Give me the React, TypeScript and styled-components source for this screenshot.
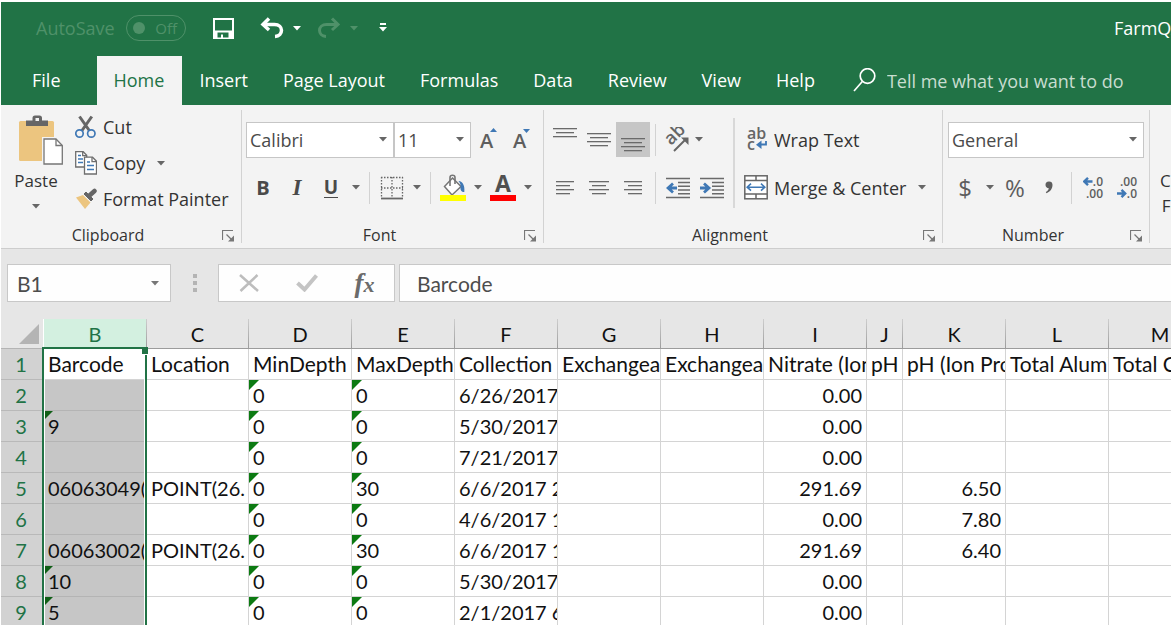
import React from "react";
import styled, { createGlobalStyle } from "styled-components";

const ui = `"Open Sans", "Noto Sans", sans-serif`;
const sheetFont = `Lato, "Open Sans", sans-serif`;
const green = "#217346";
const ink = "#333333";
const iconGrey = "#6a6a6a";
const blue = "#3f78b5";

const GlobalStyle = createGlobalStyle`
  *, *::before, *::after { box-sizing: border-box; }
  body { margin: 0; background: #ffffff; font-family: ${ui}; color: ${ink}; }
  button, input, select { font: inherit; color: inherit; margin: 0; }
  svg { display: block; flex: none; }
`;

const Window = styled.div`
  height: 100vh;
  padding: 2px 1px 6px;
  display: flex;
  flex-direction: column;
  overflow: hidden;
`;

const PlainButton = styled.button`
  border: 0;
  padding: 0;
  background: none;
  display: flex;
  align-items: center;
  white-space: nowrap;
`;

/* ---------- title bar ---------- */

const TitleBar = styled.header`
  flex: none;
  height: 54px;
  padding: 0 0 2px 35px;
  background: ${green};
  color: #ffffff;
  display: flex;
  align-items: center;
  overflow: hidden;
`;

const AutoSave = styled.label`
  width: 90px;
  font-size: 18px;
  color: #4f9169;
  white-space: nowrap;
`;

const Toggle = styled(PlainButton)`
  width: 60px;
  height: 26px;
  border: 1px solid #4f9169;
  border-radius: 13px;
  padding: 0 8px 0 6px;
  justify-content: space-between;
  color: #4f9169;
  font-size: 15px;
`;

const ToggleDot = styled.span`
  width: 12px;
  height: 12px;
  border-radius: 50%;
  background: #4f9169;
`;

const QuickTools = styled.div`
  margin-left: 27px;
  display: flex;
  align-items: center;
`;

const QuickButton = styled(PlainButton)<{ $w: number }>`
  width: ${(p) => p.$w}px;
  height: 30px;
`;

const DocumentName = styled.div`
  margin-left: auto;
  width: 57px;
  font-size: 18px;
  white-space: nowrap;
`;

/* ---------- ribbon tabs ---------- */

const TabBar = styled.nav`
  flex: none;
  height: 49px;
  padding-left: 14px;
  background: ${green};
  color: #ffffff;
  display: flex;
  font-size: 18px;
`;

const Tab = styled(PlainButton)<{ $active?: boolean; $apart?: boolean }>`
  padding: 0 18px 2px 17px;
  margin-right: ${(p) => (p.$apart ? 18 : 0)}px;
  background: ${(p) => (p.$active ? "#f3f3f3" : "transparent")};
  color: ${(p) => (p.$active ? green : "#ffffff")};
`;

const TellMe = styled.label`
  margin-left: 20px;
  flex: 1;
  display: flex;
  align-items: center;
  gap: 10px;
`;

const TellMeInput = styled.input`
  flex: 1;
  min-width: 0;
  border: 0;
  padding: 0;
  background: transparent;
  outline: 0;
  &::placeholder { color: #c8ddd0; opacity: 1; }
`;

/* ---------- ribbon ---------- */

const Ribbon = styled.section`
  flex: none;
  height: 144px;
  background: #f3f3f3;
  border-bottom: 1px solid #cdcdcd;
  display: flex;
  overflow: hidden;
`;

const Group = styled.div<{ $w?: number }>`
  flex: ${(p) => (p.$w ? "none" : "1 0 0")};
  width: ${(p) => (p.$w ? `${p.$w}px` : "auto")};
  display: flex;
  flex-direction: column;
`;

const GroupDivider = styled.div`
  flex: none;
  width: 1px;
  margin: 5px 0;
  background: #d2d2d2;
`;

const GroupBody = styled.div<{ $left: number }>`
  flex: 1;
  min-height: 0;
  padding: 4px 0 0 ${(p) => p.$left}px;
  display: flex;
  align-items: flex-start;
`;

const GroupFooter = styled.div`
  flex: none;
  height: 26px;
  display: flex;
  align-items: center;
  font-size: 16px;
`;

const GroupName = styled.span`
  flex: 1;
  text-align: center;
`;

const Launcher = styled(PlainButton)`
  width: 26px;
  height: 26px;
  justify-content: center;
`;

const PasteButton = styled(PlainButton)`
  width: 54px;
  padding-top: 6px;
  flex-direction: column;
  font-size: 17px;
  line-height: 28px;
`;

const PasteCaret = styled.span`
  height: 22px;
  display: flex;
  align-items: center;
`;

const CommandList = styled.div`
  margin-left: 12px;
  display: flex;
  flex-direction: column;
`;

const Command = styled(PlainButton)`
  height: 36px;
  gap: 6px;
  font-size: 18px;
`;

const CommandCaret = styled.span`
  margin-left: 6px;
`;

const ToolRows = styled.div`
  padding-top: 13px;
  display: flex;
  flex-direction: column;
  gap: 13px;
`;

const ToolRow = styled.div`
  height: 35px;
  display: flex;
  align-items: center;
`;

const ToolButton = styled(PlainButton)<{ $w?: number; $pressed?: boolean }>`
  width: ${(p) => p.$w ?? 34}px;
  height: 35px;
  justify-content: center;
  background: ${(p) => (p.$pressed ? "#c6c6c6" : "transparent")};
  color: #4a4a4a;
  font-size: 19px;
`;

const CaretButton = styled(PlainButton)`
  width: 16px;
  height: 35px;
  justify-content: center;
`;

const ToolDivider = styled.span`
  width: 1px;
  height: 32px;
  margin: 0 5px;
  background: #d2d2d2;
`;

const TallDivider = styled.span`
  width: 2px;
  height: 90px;
  margin: 9px 9px 0 4px;
  background: #d8d8d8;
`;

const Bold = styled.b`
  font-size: 20px;
`;

const Italic = styled.i`
  font-family: "Liberation Serif", serif;
  font-weight: 700;
  font-size: 23px;
`;

const Underline = styled.span`
  font-weight: 700;
  line-height: 20px;
  border-bottom: 1px solid #4a4a4a;
`;

const Symbol = styled.span`
  font-size: 24px;
  color: #5e5e5e;
`;

const SelectBox = styled.span<{ $w: number }>`
  width: ${(p) => p.$w}px;
  height: 36px;
  display: grid;
  align-items: center;
  background: #ffffff;
  border: 1px solid #c6c6c6;

  & > * { grid-area: 1 / 1; }
  & > svg { justify-self: end; margin-right: 6px; pointer-events: none; }
`;

const SelectControl = styled.select`
  appearance: none;
  width: 100%;
  height: 34px;
  border: 0;
  padding: 0 3px;
  background: transparent;
  color: #4a4a4a;
  font-size: 18px;
`;

const ConditionalButton = styled(PlainButton)`
  padding-top: 59px;
  flex-direction: column;
  font-size: 17px;
  line-height: 25px;
`;

/* ---------- formula bar ---------- */

const FormulaBar = styled.section`
  flex: none;
  height: 70px;
  padding: 15px 0 17px 6px;
  background: #e6e6e6;
  display: flex;
  font-family: ${sheetFont};
  font-size: 21px;
  color: #4d4d4d;
`;

const NameBox = styled.label`
  width: 164px;
  border: 1px solid #c8c8c8;
  background: #fefefe;
  padding: 0 11px 0 9px;
  display: flex;
  align-items: center;
`;

const BareInput = styled.input`
  flex: 1;
  min-width: 0;
  border: 0;
  padding: 0;
  background: transparent;
  outline: 0;
`;

const Grip = styled.span`
  width: 47px;
  display: flex;
  flex-direction: column;
  align-items: center;
  justify-content: center;
  gap: 3px;
`;

const GripDot = styled.span`
  width: 4px;
  height: 4px;
  background: #b4b4b4;
`;

const EntryButtons = styled.div`
  width: 177px;
  border: 1px solid #c8c8c8;
  background: #fefefe;
  display: flex;
  justify-content: center;
`;

const EntryButton = styled(PlainButton)`
  width: 58px;
  justify-content: center;
  font: italic 700 27px "Liberation Serif", serif;
  color: #6b6b6b;
`;

const SmallX = styled.span`
  font-size: 22px;
`;

const FormulaBox = styled.label`
  flex: 1;
  margin-left: 4px;
  padding-left: 17px;
  border: 1px solid #c8c8c8;
  border-right: 0;
  background: #fefefe;
  display: flex;
  align-items: center;
`;

/* ---------- sheet ---------- */

const SheetArea = styled.main`
  flex: 1;
  min-height: 0;
  background: #ffffff;
  overflow: hidden;
`;

const Sheet = styled.table`
  table-layout: fixed;
  width: 1px;
  border-collapse: separate;
  border-spacing: 0;
  font-family: ${sheetFont};
  font-size: 20px;
  color: #111111;
`;

const ColumnHead = styled.th<{ $selected?: boolean }>`
  height: 30px;
  padding: 2px 0 0;
  font-weight: 400;
  line-height: 27px;
  background: ${(p) => (p.$selected ? "#d3f0e0" : "#e6e6e6")};
  color: ${(p) => (p.$selected ? green : "#111111")};
  border-bottom: 1px solid #9b9b9b;
  border-right: 1px solid;
  border-image: linear-gradient(#cfcfcf, #9b9b9b) 1;
`;

const CornerHead = styled.th`
  height: 30px;
  padding: 0 4px 4px 0;
  background: #e6e6e6;
  border-bottom: 1px solid #b4b4b4;
  border-right: 1px solid #ffffff;
  vertical-align: bottom;

  & > svg { margin-left: auto; }
`;

const RowHead = styled.th`
  height: 31px;
  padding: 1px 3px 1px 0;
  font-weight: 400;
  line-height: 28px;
  background: #d2d2d2;
  color: ${green};
  border-bottom: 1px solid #b9b9b9;
`;

const Cell = styled.td<{ $selected?: boolean; $flag?: boolean; $right?: boolean; $title?: boolean }>`
  position: relative;
  height: 31px;
  padding: 1px 0;
  font-size: ${(p) => (p.$title ? 21 : 20)}px;
  line-height: 28px;
  text-align: ${(p) => (p.$right ? "right" : "left")};
  background: ${(p) => (p.$selected ? "#c6c6c6" : "#ffffff")};
  border-right: 1px solid #d4d4d4;
  border-bottom: 1px solid ${(p) => (p.$selected ? "#b4b4b4" : "#d4d4d4")};

  &::before {
    content: "";
    display: ${(p) => (p.$flag ? "block" : "none")};
    position: absolute;
    left: ${(p) => (p.$selected ? 1 : 0)}px;
    top: 0;
    border: ${(p) => (p.$selected ? 4 : 5)}px solid transparent;
    border-top-color: ${(p) => (p.$selected ? "#0f5f16" : "#0c7a12")};
    border-left-color: ${(p) => (p.$selected ? "#0f5f16" : "#0c7a12")};
  }
`;

const CellText = styled.div`
  position: relative;
  padding: 0 4px;
  height: 28px;
  overflow: hidden;
  white-space: nowrap;
`;

const SelectionFrame = styled.div`
  position: absolute;
  z-index: 1;
  left: -2px;
  top: -2px;
  width: 105px;
  height: 200vh;
  border: 2px solid ${green};
  box-shadow: inset 1px 0 #ffffff, inset -1px 0 #ffffff;
  pointer-events: none;

  &::after {
    content: "";
    position: absolute;
    right: -3px;
    top: -2px;
    width: 6px;
    height: 8px;
    background: ${green};
    border-bottom: 1px solid #ffffff;
  }
`;

/* ---------- icons ---------- */

const Caret = ({ color = "#666666" }: { color?: string }) => (
  <svg width="8" height="5" viewBox="0 0 8 5"><path d="M0 0h8L4 4.6z" fill={color} /></svg>
);

const SaveIcon = () => (
  <svg width="21" height="21" viewBox="0 0 21 21">
    <path fillRule="evenodd" fill="#fff" d="M0 0h21v21H0zM2 2v10.500h17V2zM4.500 14.500V19.500H8v-3h2v3h5.500v-5z" />
  </svg>
);

const UndoIcon = () => (
  <svg width="24" height="22" viewBox="0 0 24 22" fill="none" stroke="#fff" strokeWidth="3.500">
    <path d="M9 1.500L3 7.500l6 5.500" />
    <path d="M3 7.500h11.500c4.500 0 7 2.800 7 5.800s-2.300 6-6.500 6.200" />
  </svg>
);

const RedoIcon = () => (
  <svg width="25" height="22" viewBox="0 0 25 22" fill="none" stroke="#4f9169" strokeWidth="3">
    <path d="M15 1.500l6 6-6 5.500" />
    <path d="M21 7.500H9.500c-4.500 0-7 2.800-7 5.800s2.300 6 6.500 6.200" />
  </svg>
);

const CustomizeIcon = () => (
  <svg width="8" height="10" viewBox="0 0 8 10" fill="#fff"><path d="M1 0h6v2H1zM0 4h8L4 8.600z" /></svg>
);

const SearchIcon = () => (
  <svg width="24" height="26" viewBox="0 0 24 26" fill="none" stroke="#fff" strokeWidth="1.700">
    <circle cx="14.500" cy="8" r="7.300" /><path d="M9.300 13.500L1 23" />
  </svg>
);

const PasteIcon = () => (
  <svg width="54" height="52" viewBox="0 0 54 52">
    <rect x="10" y="6" width="35" height="40" rx="1.500" fill="#ecc57f" />
    <path d="M17 11V5.500h6.500V3a2.500 2.500 0 0 1 2.500-2.500h4.500A2.500 2.500 0 0 1 33 3v2.500h6V11z" fill="#666" />
    <rect x="26.500" y="3" width="3.500" height="3" fill="#f3f3f3" />
    <path d="M33 22h15l7 8v22H33z" fill="#f3f3f3" />
    <path d="M35 24h12l6.300 6.500V49H35z" fill="#fff" stroke="#767676" strokeWidth="1.300" />
    <path d="M47 24v6.500h6.300" fill="none" stroke="#767676" strokeWidth="1.300" />
  </svg>
);

const CutIcon = () => (
  <svg width="22" height="24" viewBox="0 0 22 24" fill="none">
    <path d="M4.500 1.500l9.800 14M16.800 1.500L7 15.500" stroke="#666" strokeWidth="3" />
    <circle cx="4.500" cy="18.500" r="3.700" stroke={blue} strokeWidth="1.700" />
    <circle cx="16.300" cy="18.500" r="3.700" stroke={blue} strokeWidth="1.700" />
  </svg>
);

const CopyIcon = () => (
  <svg width="22" height="24" viewBox="0 0 22 24" fill="#fff" stroke="#6e6e6e" strokeWidth="1.300">
    <path d="M.7.7h7.500l3.500 3.500V16H.7z" /><path d="M7.700.7v4h4" fill="none" />
    <path d="M3 4.500h3M3 8h5M3 11.500h5" stroke={blue} strokeWidth="1.500" />
    <path d="M9.500 6.200h8l4 4V23h-12z" /><path d="M17 6.200v4.500h4.500" fill="none" />
    <path d="M12 11h3M12 14.500h7M12 18.500h7" stroke={blue} strokeWidth="1.500" />
  </svg>
);

const PainterIcon = () => (
  <svg width="22" height="22" viewBox="0 0 22 22">
    <path d="M1 9.500l7-2.500 7.500 7.500L10 21z" fill="#ecc57f" />
    <path d="M8 6l3-3 8 8-3 3z" fill="#666" stroke="#f3f3f3" />
    <path d="M14.500 7.500l5-4.500" stroke="#666" strokeWidth="4.500" strokeLinecap="round" />
  </svg>
);

const LauncherIcon = () => (
  <svg width="13" height="13" viewBox="0 0 13 13" fill="none" stroke="#777">
    <path d="M.5 11V1.500H11" strokeWidth="1.200" />
    <path d="M4.500 5.500l6 6" strokeWidth="1.300" /><path d="M12 6.500V12.500H6z" fill="#777" stroke="none" />
  </svg>
);

const SizeIcon = ({ grow }: { grow?: boolean }) => (
  <svg width="22" height="24" viewBox="0 0 22 24">
    <text x="2" y="20" fontFamily="Open Sans" fontWeight="600" fontSize="20" fill="#5e5e5e">A</text>
    <path d={grow ? "M12 4h7l-3.500-4z" : "M12 1h7l-3.500 4z"} fill={blue} />
  </svg>
);

const BordersIcon = () => (
  <svg width="24" height="24" viewBox="0 0 24 24" fill="none" stroke="#666">
    <path d="M1.500 1v20M12 1v20M22.500 1v20M1 1.500h22M1 12h22" strokeWidth="1.300" strokeDasharray="1.500 1.500" />
    <path d="M1 22.500h22" strokeWidth="1.800" />
  </svg>
);

const FillIcon = () => (
  <svg width="26" height="28" viewBox="0 0 26 28">
    <path d="M12.500 4l8.500 8.500-9 8.500L4.500 12.500z" fill="#fff" stroke="#767676" strokeWidth="1.500" />
    <path d="M10 12V3.500C10 .5 15 .5 15 3.500V10" fill="none" stroke="#767676" strokeWidth="1.600" />
    <path d="M18.500 7c4.500.5 6.500 5 5.800 11-3 0-4-2-3.800-4.500.5-2 0-4-2-6.500z" fill={blue} />
    <rect y="21" width="26" height="6" fill="#ffff00" />
  </svg>
);

const FontColorIcon = () => (
  <svg width="26" height="28" viewBox="0 0 26 28">
    <text x="13" y="18" textAnchor="middle" fontFamily="Open Sans" fontWeight="700" fontSize="23" fill="#505050">A</text>
    <rect y="21" width="26" height="6" fill="#ff0000" />
  </svg>
);

const LinesIcon = ({ lines, height = 18 }: { lines: [number, number, number][]; height?: number }) => (
  <svg width="24" height={height} viewBox={`0 0 24 ${height}`} fill={iconGrey}>
    {lines.map(([x, y, w]) => <rect key={y} x={x} y={y} width={w} height="1.300" />)}
  </svg>
);

const OrientationIcon = () => (
  <svg width="26" height="26" viewBox="0 0 26 26">
    <text x="8" y="19" transform="rotate(-45 8 19)" fontFamily="Open Sans" fontWeight="600" fontSize="18" fill="#666">ab</text>
    <path d="M11 24L23 12" stroke="#666" strokeWidth="1.900" /><path d="M18 10.500H25.500V18z" fill="#666" />
  </svg>
);

const IndentIcon = ({ increase }: { increase?: boolean }) => (
  <svg width="24" height="22" viewBox="0 0 24 22">
    <path d="M0 1.500h24M12 5.500h12M12 9.200h12M12 13h12M12 16.800h12M0 20.500h24" stroke={iconGrey} strokeWidth="1.400" />
    <path
      d={increase ? "M0 11h9M4 6.500l5 4.500-5 4.500" : "M11 11H2M7 6.500L2 11l5 4.500"}
      fill="none" stroke={blue} strokeWidth="2.800"
    />
  </svg>
);

const WrapIcon = () => (
  <svg width="24" height="26" viewBox="0 0 24 26">
    <g fontFamily="Open Sans" fontWeight="600" fontSize="16" fill="#666">
      <text x="3" y="12">ab</text><text x="3" y="23">c</text>
    </g>
    <path d="M22 14v3.500h-8" fill="none" stroke={blue} strokeWidth="1.800" />
    <path d="M17.500 13.500v8.500L12 17.700z" fill={blue} />
  </svg>
);

const MergeIcon = () => (
  <svg width="24" height="25" viewBox="0 0 24 25" fill="none">
    <rect x=".8" y=".8" width="22.400" height="23" fill="#fff" stroke="#666" strokeWidth="1.500" />
    <path d="M1 5.500h22M1 19h22M12 1v4.500M12 19v5" stroke="#666" strokeWidth="1.500" />
    <path d="M3.500 12.200h17M7 8.700l-3.800 3.500L7 15.700M17 8.700l3.800 3.500-3.800 3.500" stroke={blue} strokeWidth="1.600" />
  </svg>
);

const DecimalIcon = ({ fewer }: { fewer?: boolean }) => (
  <svg width="22" height="24" viewBox="0 0 22 24">
    <g fontFamily="Open Sans" fontWeight="600" fontSize="12" fill="#5e5e5e">
      <text x="20" y="10" textAnchor="end">{fewer ? ".00" : ".0"}</text>
      <text x="20" y="22" textAnchor="end">{fewer ? ".0" : ".00"}</text>
    </g>
    <path
      d={fewer ? "M0 17.500h7M4.500 13.800L8.200 17.500l-3.700 3.700" : "M9.500 5.500h-7M5 1.800L1.300 5.500 5 9.200"}
      fill="none" stroke={blue} strokeWidth="2.400"
    />
  </svg>
);

const CommaIcon = () => (
  <svg width="10" height="14" viewBox="0 0 10 14"><path d="M1.500 4a3.500 3.500 0 0 1 7-.2c0 4-2.300 7-6 8.500l-.7-1.300c2-1 2.800-2.200 3-3.700C3 7.200 1.500 6 1.500 4z" fill="#5e5e5e" /></svg>
);

const CancelIcon = () => (
  <svg width="20" height="18" viewBox="0 0 20 18"><path d="M1 1l18 16M18.500 1L1.500 17" stroke="#bdbdbd" strokeWidth="2.500" /></svg>
);

const AcceptIcon = () => (
  <svg width="22" height="18" viewBox="0 0 22 18"><path d="M1.500 9l7 6.500L20.500 1.500" fill="none" stroke="#c4c4c4" strokeWidth="4" /></svg>
);

/* ---------- data ---------- */

const tabs = ["File", "Home", "Insert", "Page Layout", "Formulas", "Data", "Review", "View", "Help"];
const columns = ["B", "C", "D", "E", "F", "G", "H", "I", "J", "K", "L", "M"];
const columnWidths: Record<string, number> = { C: 102, J: 36 };
const flagged = ["B", "D", "E"];
const rightAligned = ["I", "K"];

const rows: Record<string, string>[] = [
  {
    B: "Barcode", C: "Location", D: "MinDepth", E: "MaxDepth", F: "Collection Date", G: "Exchangeable",
    H: "Exchangeable", I: "Nitrate (Ion Probe)", J: "pH", K: "pH (Ion Probe)", L: "Total Aluminum", M: "Total Calcium",
  },
  { D: "0", E: "0", F: "6/26/2017", I: "0.00" },
  { B: "9", D: "0", E: "0", F: "5/30/2017", I: "0.00" },
  { D: "0", E: "0", F: "7/21/2017", I: "0.00" },
  { B: "06063049(", C: "POINT(26.", D: "0", E: "30", F: "6/6/2017 2", I: "291.69", K: "6.50" },
  { D: "0", E: "0", F: "4/6/2017 1", I: "0.00", K: "7.80" },
  { B: "06063002(", C: "POINT(26.", D: "0", E: "30", F: "6/6/2017 1", I: "291.69", K: "6.40" },
  { B: "10", D: "0", E: "0", F: "5/30/2017", I: "0.00" },
  { B: "5", D: "0", E: "0", F: "2/1/2017 6", I: "0.00" },
];

const Dropdown = ({ label, value, width }: { label: string; value: string; width: number }) => (
  <SelectBox $w={width}>
    <SelectControl aria-label={label} defaultValue={value}><option>{value}</option></SelectControl>
    <Caret />
  </SelectBox>
);

const Footer = ({ name }: { name: string }) => (
  <GroupFooter>
    <GroupName>{name}</GroupName>
    <Launcher aria-label={`${name} settings`}><LauncherIcon /></Launcher>
  </GroupFooter>
);

const More = ({ label }: { label: string }) => <CaretButton aria-label={label}><Caret /></CaretButton>;

export default function App() {
  return (
    <Window>
      <GlobalStyle />
      <TitleBar>
        <AutoSave htmlFor="autosave">AutoSave</AutoSave>
        <Toggle id="autosave" role="switch" aria-checked={false}><ToggleDot />Off</Toggle>
        <QuickTools>
          <QuickButton $w={47} aria-label="Save"><SaveIcon /></QuickButton>
          <QuickButton $w={33} aria-label="Undo"><UndoIcon /></QuickButton>
          <QuickButton $w={24} aria-label="Undo history"><Caret color="#ffffff" /></QuickButton>
          <QuickButton $w={33} aria-label="Redo"><RedoIcon /></QuickButton>
          <QuickButton $w={29} aria-label="Redo history"><Caret color="#4f9169" /></QuickButton>
          <QuickButton $w={12} aria-label="Customize toolbar"><CustomizeIcon /></QuickButton>
        </QuickTools>
        <DocumentName>FarmQA</DocumentName>
      </TitleBar>

      <TabBar>
        {tabs.map((t) => <Tab key={t} $active={t === "Home"} $apart={t === "File"}>{t}</Tab>)}
        <TellMe><SearchIcon /><TellMeInput aria-label="Tell me" placeholder="Tell me what you want to do" /></TellMe>
      </TabBar>

      <Ribbon>
        <Group $w={240}>
          <GroupBody $left={8}>
            <PasteButton><PasteIcon /><span>Paste</span><PasteCaret><Caret /></PasteCaret></PasteButton>
            <CommandList>
              <Command><CutIcon />Cut</Command>
              <Command><CopyIcon />Copy<CommandCaret><Caret /></CommandCaret></Command>
              <Command><PainterIcon />Format Painter</Command>
            </CommandList>
          </GroupBody>
          <Footer name="Clipboard" />
        </Group>
        <GroupDivider />
        <Group $w={301}>
          <GroupBody $left={4}>
            <ToolRows>
              <ToolRow>
                <Dropdown label="Font" value="Calibri" width={148} />
                <Dropdown label="Font size" value="11" width={77} />
                <ToolButton $w={36} aria-label="Increase font size"><SizeIcon grow /></ToolButton>
                <ToolButton $w={30} aria-label="Decrease font size"><SizeIcon /></ToolButton>
              </ToolRow>
              <ToolRow>
                <ToolButton aria-label="Bold"><Bold>B</Bold></ToolButton>
                <ToolButton aria-label="Italic"><Italic>I</Italic></ToolButton>
                <ToolButton aria-label="Underline"><Underline>U</Underline></ToolButton>
                <More label="Underline styles" />
                <ToolDivider />
                <ToolButton aria-label="Borders"><BordersIcon /></ToolButton>
                <More label="Border styles" />
                <ToolDivider />
                <ToolButton aria-label="Fill color"><FillIcon /></ToolButton>
                <More label="Fill colors" />
                <ToolButton aria-label="Font color"><FontColorIcon /></ToolButton>
                <More label="Font colors" />
              </ToolRow>
            </ToolRows>
          </GroupBody>
          <Footer name="Font" />
        </Group>
        <GroupDivider />
        <Group $w={398}>
          <GroupBody $left={4}>
            <ToolRows>
              <ToolRow>
                <ToolButton aria-label="Top align"><LinesIcon height={28} lines={[[0, 2, 24], [3, 6, 18], [0, 10, 24]]} /></ToolButton>
                <ToolButton aria-label="Middle align"><LinesIcon height={28} lines={[[0, 7, 24], [3, 11, 18], [0, 15, 24], [3, 19, 18]]} /></ToolButton>
                <ToolButton $pressed aria-label="Bottom align"><LinesIcon height={28} lines={[[0, 12, 24], [3, 16, 18], [0, 20, 24], [3, 24, 18]]} /></ToolButton>
                <ToolDivider />
                <ToolButton $w={30} aria-label="Orientation"><OrientationIcon /></ToolButton>
                <More label="Orientation options" />
              </ToolRow>
              <ToolRow>
                <ToolButton aria-label="Align left"><LinesIcon lines={[[3, 2, 18], [3, 6, 14], [3, 10, 18], [3, 14, 14]]} /></ToolButton>
                <ToolButton aria-label="Center"><LinesIcon lines={[[2, 2, 20], [5, 6, 14], [2, 10, 20], [5, 14, 14]]} /></ToolButton>
                <ToolButton aria-label="Align right"><LinesIcon lines={[[3, 2, 18], [7, 6, 14], [3, 10, 18], [7, 14, 14]]} /></ToolButton>
                <ToolDivider />
                <ToolButton aria-label="Decrease indent"><IndentIcon /></ToolButton>
                <ToolButton aria-label="Increase indent"><IndentIcon increase /></ToolButton>
              </ToolRow>
            </ToolRows>
            <TallDivider />
            <ToolRows>
              <ToolRow><Command><WrapIcon />Wrap Text</Command></ToolRow>
              <ToolRow><Command><MergeIcon />Merge &amp; Center<CommandCaret><Caret /></CommandCaret></Command></ToolRow>
            </ToolRows>
          </GroupBody>
          <Footer name="Alignment" />
        </Group>
        <GroupDivider />
        <Group $w={206}>
          <GroupBody $left={5}>
            <ToolRows>
              <ToolRow><Dropdown label="Number format" value="General" width={196} /></ToolRow>
              <ToolRow>
                <ToolButton aria-label="Accounting format"><Symbol>$</Symbol></ToolButton>
                <More label="Currencies" />
                <ToolButton aria-label="Percent"><Symbol>%</Symbol></ToolButton>
                <ToolButton aria-label="Comma style"><CommaIcon /></ToolButton>
                <ToolDivider />
                <ToolButton aria-label="Increase decimal"><DecimalIcon /></ToolButton>
                <ToolButton aria-label="Decrease decimal"><DecimalIcon fewer /></ToolButton>
              </ToolRow>
            </ToolRows>
          </GroupBody>
          <Footer name="Number" />
        </Group>
        <GroupDivider />
        <Group>
          <GroupBody $left={10}>
            <ConditionalButton><span>Conditional</span><span>Formatting</span></ConditionalButton>
          </GroupBody>
        </Group>
      </Ribbon>

      <FormulaBar>
        <NameBox><BareInput aria-label="Name box" defaultValue="B1" /><Caret color="#777777" /></NameBox>
        <Grip><GripDot /><GripDot /><GripDot /></Grip>
        <EntryButtons>
          <EntryButton aria-label="Cancel"><CancelIcon /></EntryButton>
          <EntryButton aria-label="Enter"><AcceptIcon /></EntryButton>
          <EntryButton aria-label="Insert function"><span>f<SmallX>x</SmallX></span></EntryButton>
        </EntryButtons>
        <FormulaBox><BareInput aria-label="Formula" defaultValue="Barcode" /></FormulaBox>
      </FormulaBar>

      <SheetArea>
        <Sheet>
          <colgroup>
            <col width="43" />
            {columns.map((c) => <col key={c} width={columnWidths[c] ?? 103} />)}
          </colgroup>
          <thead>
            <tr>
              <CornerHead aria-label="Select all">
                <svg width="20" height="20" viewBox="0 0 20 20"><path d="M20 0v20H0z" fill="#b4b4b4" /></svg>
              </CornerHead>
              {columns.map((c) => <ColumnHead key={c} scope="col" $selected={c === "B"}>{c}</ColumnHead>)}
            </tr>
          </thead>
          <tbody>
            {rows.map((row, r) => (
              <tr key={r}>
                <RowHead scope="row">{r + 1}</RowHead>
                {columns.map((c) => (
                  <Cell
                    key={c}
                    $title={r === 0}
                    $selected={c === "B" && r > 0}
                    $flag={r > 0 && flagged.includes(c) && !!row[c] && row[c].length < 3}
                    $right={r > 0 && rightAligned.includes(c)}
                  >
                    <CellText>{row[c]}</CellText>
                    {c === "B" && r === 0 && <SelectionFrame />}
                  </Cell>
                ))}
              </tr>
            ))}
          </tbody>
        </Sheet>
      </SheetArea>
    </Window>
  );
}
